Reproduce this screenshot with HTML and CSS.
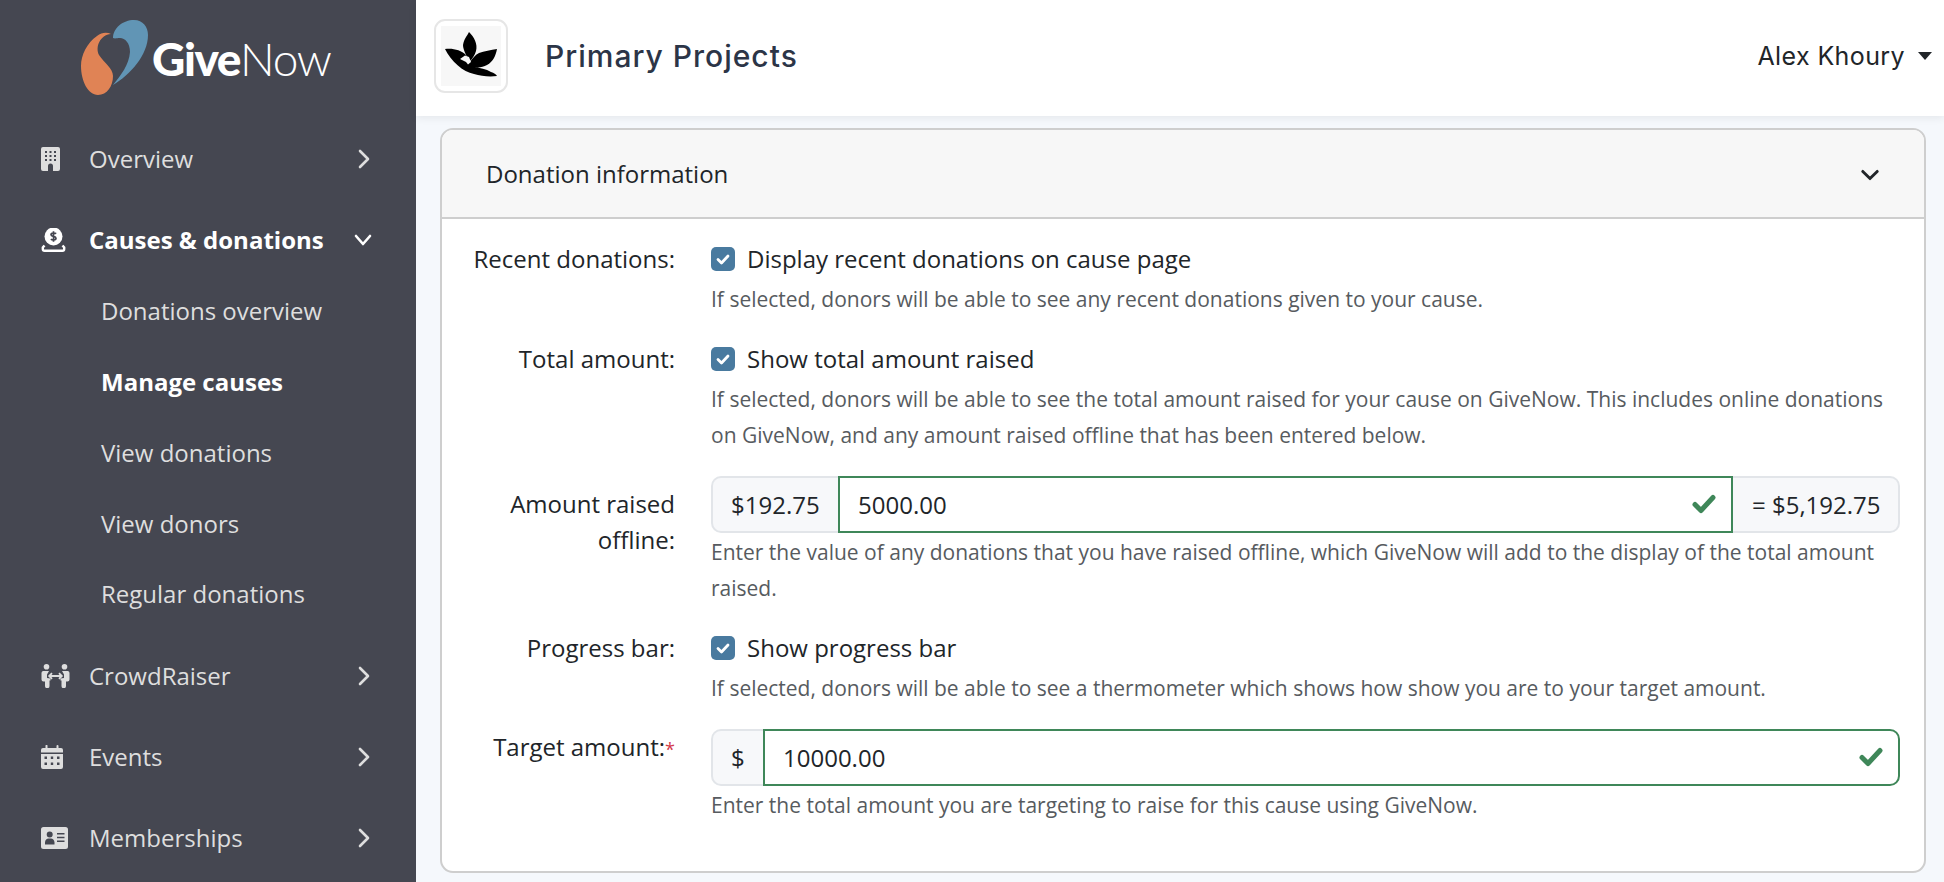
FILE: index.html
```html
<!DOCTYPE html>
<html lang="en">
<head>
<meta charset="utf-8">
<title>Primary Projects</title>
<link rel="stylesheet" href="styles.css">
</head>
<body>
<div class="app">
  <aside class="sidebar">
    <div class="logo">
      <svg class="logo-mark" viewBox="0 0 70 78" width="70" height="78">
        <path fill="#e08355" d="M31 15C27 13 22 13 17 17C7 24 1 36 1 47C1 62 8 76 18 76C27 76 33 67 33 57C33 49 24 44 19 36C15 28 20 16 31 15Z"/>
        <path fill="#6195b5" d="M33 19C33 9 43 1 54 1C63 1 68 8 68 16C68 36 50 56 33 66C41 56 49 46 50 33C50 24 45 19 40 19C37 19 35 20 33 19Z"/>
      </svg>
      <span class="logo-text"><b>Give</b><span>Now</span></span>
    </div>
    <nav>
      <ul class="nav">
        <li class="nav-group">
          <a class="nav-item">
            <span class="nav-icon"><svg viewBox="0 0 19 24" width="19" height="24"><path fill="currentColor" fill-rule="evenodd" d="M2 0H17A2 2 0 0 1 19 2V22A2 2 0 0 1 17 24H12V19A2.500 2.500 0 0 0 7 19V24H2A2 2 0 0 1 0 22V2A2 2 0 0 1 2 0ZM4 4V6H6V4ZM8.500 4V6H10.500V4ZM13 4V6H15V4ZM4 8V10H6V8ZM8.500 8V10H10.500V8ZM13 8V10H15V8ZM4 12V14H6V12ZM8.500 12V14H10.500V12ZM13 12V14H15V12Z"/></svg></span>
            <span class="nav-label">Overview</span>
            <svg class="chev-right" viewBox="0 0 12 20" width="12" height="20"><path d="M2 2L10 10L2 18"/></svg>
          </a>
        </li>
        <li class="nav-group">
          <a class="nav-item active">
            <span class="nav-icon"><svg viewBox="0 0 25 24" width="25" height="24"><circle cx="12.500" cy="8.500" r="9" fill="currentColor"/><path fill="none" stroke="currentColor" stroke-width="2.400" d="M3.500 17.500L1.800 19.500V21A1.800 1.800 0 0 0 3.600 22.800H21.400A1.800 1.800 0 0 0 23.200 21V19.500L21.500 17.500"/><path fill="none" stroke="#454751" stroke-width="1.700" d="M15.200 5.700C14 4.700 10 4.700 10 6.700C10 8.800 15 7.900 15 10.200C15 12.300 11 12.300 9.900 11.100M12.500 3.300V13.700"/></svg></span>
            <span class="nav-label">Causes &amp; donations</span>
            <svg class="chev-down" viewBox="0 0 18 12" width="18" height="12"><path d="M2 2L9 10L16 2"/></svg>
          </a>
          <ul class="subnav">
            <li><a class="sub-item">Donations overview</a></li>
            <li><a class="sub-item active">Manage causes</a></li>
            <li><a class="sub-item">View donations</a></li>
            <li><a class="sub-item">View donors</a></li>
            <li><a class="sub-item">Regular donations</a></li>
          </ul>
        </li>
        <li class="nav-group">
          <a class="nav-item">
            <span class="nav-icon"><svg viewBox="0 0 29 24" width="29" height="24"><circle cx="5.500" cy="2.800" r="2.800" fill="currentColor"/><circle cx="23.500" cy="2.800" r="2.800" fill="currentColor"/><path fill="currentColor" d="M2 7H8L6 10.500V14L9.500 14.500V16.500H8.500V22A2 2 0 0 1 4 22V17.500H2.500A2 2 0 0 1 .5 15.500V9A2 2 0 0 1 2 7ZM21 7H27A2 2 0 0 1 28.500 9V15.500A2 2 0 0 1 26.500 17.500H25V22A2 2 0 0 1 20.500 22V16.500H19.500V14.500L23 14V10.500Z"/><path fill="none" stroke="currentColor" stroke-width="1.800" d="M8.500 12H20.500M11 9.200L8.200 12L11 14.800M18 9.200L20.800 12L18 14.800"/></svg></span>
            <span class="nav-label">CrowdRaiser</span>
            <svg class="chev-right" viewBox="0 0 12 20" width="12" height="20"><path d="M2 2L10 10L2 18"/></svg>
          </a>
        </li>
        <li class="nav-group">
          <a class="nav-item">
            <span class="nav-icon"><svg viewBox="0 0 22 24" width="22" height="24"><path fill="currentColor" fill-rule="evenodd" d="M5 0A1 1 0 0 1 6.500 1V3H15.500V1A1 1 0 0 1 17.500 1V3H20A2 2 0 0 1 22 5V7.500H0V5A2 2 0 0 1 2 3H4.500V1A1 1 0 0 1 5 0ZM0 9H22V22A2 2 0 0 1 20 24H2A2 2 0 0 1 0 22ZM3.500 11.500V14H6V11.500ZM9.800 11.500V14H12.200V11.500ZM16 11.500V14H18.500V11.500ZM3.500 17.500V20H6V17.500ZM9.800 17.500V20H12.200V17.500ZM16 17.500V20H18.500V17.500Z"/></svg></span>
            <span class="nav-label">Events</span>
            <svg class="chev-right" viewBox="0 0 12 20" width="12" height="20"><path d="M2 2L10 10L2 18"/></svg>
          </a>
        </li>
        <li class="nav-group">
          <a class="nav-item">
            <span class="nav-icon"><svg viewBox="0 0 27 22" width="27" height="22"><path fill="currentColor" fill-rule="evenodd" d="M2.500 0H24.500A2.500 2.500 0 0 1 27 2.500V19.500A2.500 2.500 0 0 1 24.500 22H2.500A2.500 2.500 0 0 1 0 19.500V2.500A2.500 2.500 0 0 1 2.500 0ZM8.700 4.500A3 3 0 1 0 8.700 10.500A3 3 0 1 0 8.700 4.500ZM4 17.500H13.500V15.500C13.500 13 11.500 11.500 10 11.500H7.500C6 11.500 4 13 4 15.500ZM16 6V7.500H23.500V6ZM16 9.800V11.300H23.500V9.800ZM16 13.600V15.100H23.500V13.600Z"/></svg></span>
            <span class="nav-label">Memberships</span>
            <svg class="chev-right" viewBox="0 0 12 20" width="12" height="20"><path d="M2 2L10 10L2 18"/></svg>
          </a>
        </li>
      </ul>
    </nav>
  </aside>
  <div class="main">
    <header class="topbar">
      <div class="org">
        <div class="org-logo">
          <svg viewBox="0 0 60 60" width="60" height="60">
            <rect width="60" height="60" fill="#f7f7f7"/>
            <path fill="#000" d="M28 6C33 11 37 18 35 25C34 29 31 33 29 35C26 31 22 24 22 19C23 13 26 10 28 6Z"/>
            <path fill="#000" d="M4 23C12 22 20 24 25 29C27 31 28 33 29 36C31 33 34 29 38 27C43 25 50 24 56 23C55 29 52 36 46 39C42 41 38 42 33 41C39 42 45 43 50 46C53 47 55 48 56 50C48 51 40 50 33 48C22 46 10 35 4 23Z"/>
            <path fill="#f7f7f7" d="M19 33L24 29.500L28 31L30 36L27 38.500L25 36Z"/>
          </svg>
        </div>
        <h1 class="org-name">Primary Projects</h1>
      </div>
      <div class="user">Alex Khoury<span class="caret"></span></div>
    </header>
    <main class="content">
      <section class="card">
        <div class="card-header">
          <span>Donation information</span>
          <svg class="card-chev" viewBox="0 0 20 13" width="18" height="12"><path d="M2 2.500L10 10.500L18 2.500"/></svg>
        </div>
        <form class="card-body">
          <div class="row">
            <div class="label">Recent donations:</div>
            <div class="field">
              <label class="check"><span class="box"><svg viewBox="0 0 24 24" width="24" height="24"><path d="M7 12.500L10.500 16L17 9"/></svg></span>Display recent donations on cause page</label>
              <p class="help">If selected, donors will be able to see any recent donations given to your cause.</p>
            </div>
          </div>
          <div class="row">
            <div class="label">Total amount:</div>
            <div class="field">
              <label class="check"><span class="box"><svg viewBox="0 0 24 24" width="24" height="24"><path d="M7 12.500L10.500 16L17 9"/></svg></span>Show total amount raised</label>
              <p class="help">If selected, donors will be able to see the total amount raised for your cause on GiveNow. This includes online donations on GiveNow, and any amount raised offline that has been entered below.</p>
            </div>
          </div>
          <div class="row">
            <div class="label label-pad">Amount raised offline:</div>
            <div class="field">
              <div class="group">
                <span class="addon addon-first">$192.75</span>
                <span class="valid valid-mid"><input class="input" value="5000.00"><svg class="tick" viewBox="0 0 24 20" width="24" height="20"><path d="M3 10.500L9 16.500L21 3.500"/></svg></span>
                <span class="addon addon-last">= $5,192.75</span>
              </div>
              <p class="help help-input">Enter the value of any donations that you have raised offline, which GiveNow will add to the display of the total amount raised.</p>
            </div>
          </div>
          <div class="row">
            <div class="label">Progress bar:</div>
            <div class="field">
              <label class="check"><span class="box"><svg viewBox="0 0 24 24" width="24" height="24"><path d="M7 12.500L10.500 16L17 9"/></svg></span>Show progress bar</label>
              <p class="help">If selected, donors will be able to see a thermometer which shows how show you are to your target amount.</p>
            </div>
          </div>
          <div class="row">
            <div class="label">Target amount:<span class="req">*</span></div>
            <div class="field">
              <div class="group">
                <span class="addon addon-first addon-dollar">$</span>
                <span class="valid valid-end"><input class="input" value="10000.00"><svg class="tick" viewBox="0 0 24 20" width="24" height="20"><path d="M3 10.500L9 16.500L21 3.500"/></svg></span>
              </div>
              <p class="help help-input">Enter the total amount you are targeting to raise for this cause using GiveNow.</p>
            </div>
          </div>
        </form>
      </section>
    </main>
  </div>
</div>
</body>
</html>
```
FILE: styles.css
```css
* { box-sizing: border-box; }
html, body { margin: 0; height: 100%; overflow: hidden; }
body { font-family: "Open Sans", sans-serif; font-size: 24px; line-height: 36px; color: #212529; }
.app { display: flex; height: 882px; }

.sidebar { width: 416px; flex: none; background: #454751; color: #dedede; }
.logo { display: flex; height: 123px; padding: 19px 0 0 80px; }
.logo-mark { flex: none; }
.logo-text { margin: 14px 0 0 2px; font-family: "Lato", sans-serif; font-size: 46px; line-height: 52px; color: #fff; letter-spacing: -1.400px; white-space: nowrap; }
.logo-text b { font-weight: 900; }
.logo-text span { font-weight: 300; }

.nav, .subnav { list-style: none; margin: 0; padding: 0; }
.nav-group { margin-bottom: 10px; }
.subnav { padding-top: 1px; padding-bottom: .250px; }
.nav-item { display: flex; align-items: center; height: 71px; padding-left: 41px; }
.nav-icon { display: flex; align-items: center; width: 48px; flex: none; }
.nav-label { width: 269px; white-space: nowrap; }
.nav-item.active { color: #fff; font-weight: 700; }
.chev-right, .chev-down { fill: none; stroke: currentColor; stroke-width: 2.600; stroke-linecap: round; stroke-linejoin: round; flex: none; }
.chev-down { margin-left: -4px; }
.sub-item { display: flex; align-items: center; height: 70.750px; padding-left: 101px; }
.sub-item.active { color: #fff; font-weight: 700; }

.main { flex: 1; min-width: 0; background: #f5f8fc; display: flex; flex-direction: column; }
.topbar { flex: none; height: 116px; background: #fff; display: flex; align-items: center; justify-content: space-between; padding: 0 12px 4px 18px; box-shadow: 0 2px 8px rgba(0, 0, 0, .07); position: relative; }
.org { display: flex; align-items: center; }
.org-logo { width: 74px; height: 74px; border: 2px solid #e6e6e6; border-radius: 11px; background: #fff; display: flex; align-items: center; justify-content: center; }
.org-name { margin: 0 0 0 37px; font-family: "Inter", sans-serif; font-size: 30px; font-weight: 500; line-height: 40px; letter-spacing: 1px; color: #2c3547; }
.user { font-family: "Inter", sans-serif; font-size: 25px; font-weight: 400; letter-spacing: .400px; color: #212529; display: flex; align-items: center; }
.caret { width: 0; height: 0; margin-left: 13px; border: 7px solid transparent; border-top: 8px solid #212529; border-bottom: 0; }

.content { padding: 12px 18px 0 24px; }
.card { height: 745px; background: #fff; border: 2px solid #cecece; border-radius: 13px; overflow: hidden; }
.card-header { display: flex; align-items: center; justify-content: space-between; height: 89px; padding: 0 45px 0 44px; background: #f7f7f7; border-bottom: 2px solid #cecece; }
.card-chev { margin-top: 3px; fill: none; stroke: #212529; stroke-width: 3.200; stroke-linecap: round; stroke-linejoin: round; }
.card-body { padding: 22px 24px 0 0; }

.row { display: grid; grid-template-columns: 233px 1fr; column-gap: 36px; margin-bottom: 23.500px; }
.label { text-align: right; }
.label-pad { padding-top: 10px; }
.req { color: #d33a4a; font-size: 18px; }
.check { display: flex; align-items: center; height: 36px; }
.box { width: 24px; height: 24px; margin-right: 12px; border-radius: 5px; background: #497a9f; flex: none; }
.box svg { display: block; fill: none; stroke: #fff; stroke-width: 2.800; stroke-linecap: round; stroke-linejoin: round; }
.help { margin: 4px 0 0; font-size: 21px; color: #575b60; }
.help-input { margin-top: 1px; }

.group { display: flex; height: 57px; }
.addon { display: flex; align-items: center; flex: none; background: #f7f8fa; border: 2px solid #e2e5e9; }
.addon-first { width: 127px; padding-left: 18px; border-right: 0; border-radius: 10px 0 0 10px; }
.addon-dollar { width: 52px; }
.addon-last { width: 167px; padding-left: 19px; border-left: 0; border-radius: 0 10px 10px 0; }
.valid { flex: 1; min-width: 0; position: relative; display: flex; }
.input { flex: 1; min-width: 0; border: 2px solid #3f8759; background: #fff; padding: 0 60px 0 18px; font: inherit; color: #212529; outline: 0; }
.valid-end .input { border-radius: 0 10px 10px 0; }
.tick { position: absolute; right: 17px; top: 18px; fill: none; stroke: #3f8759; stroke-width: 5; stroke-linecap: round; stroke-linejoin: round; }
```
